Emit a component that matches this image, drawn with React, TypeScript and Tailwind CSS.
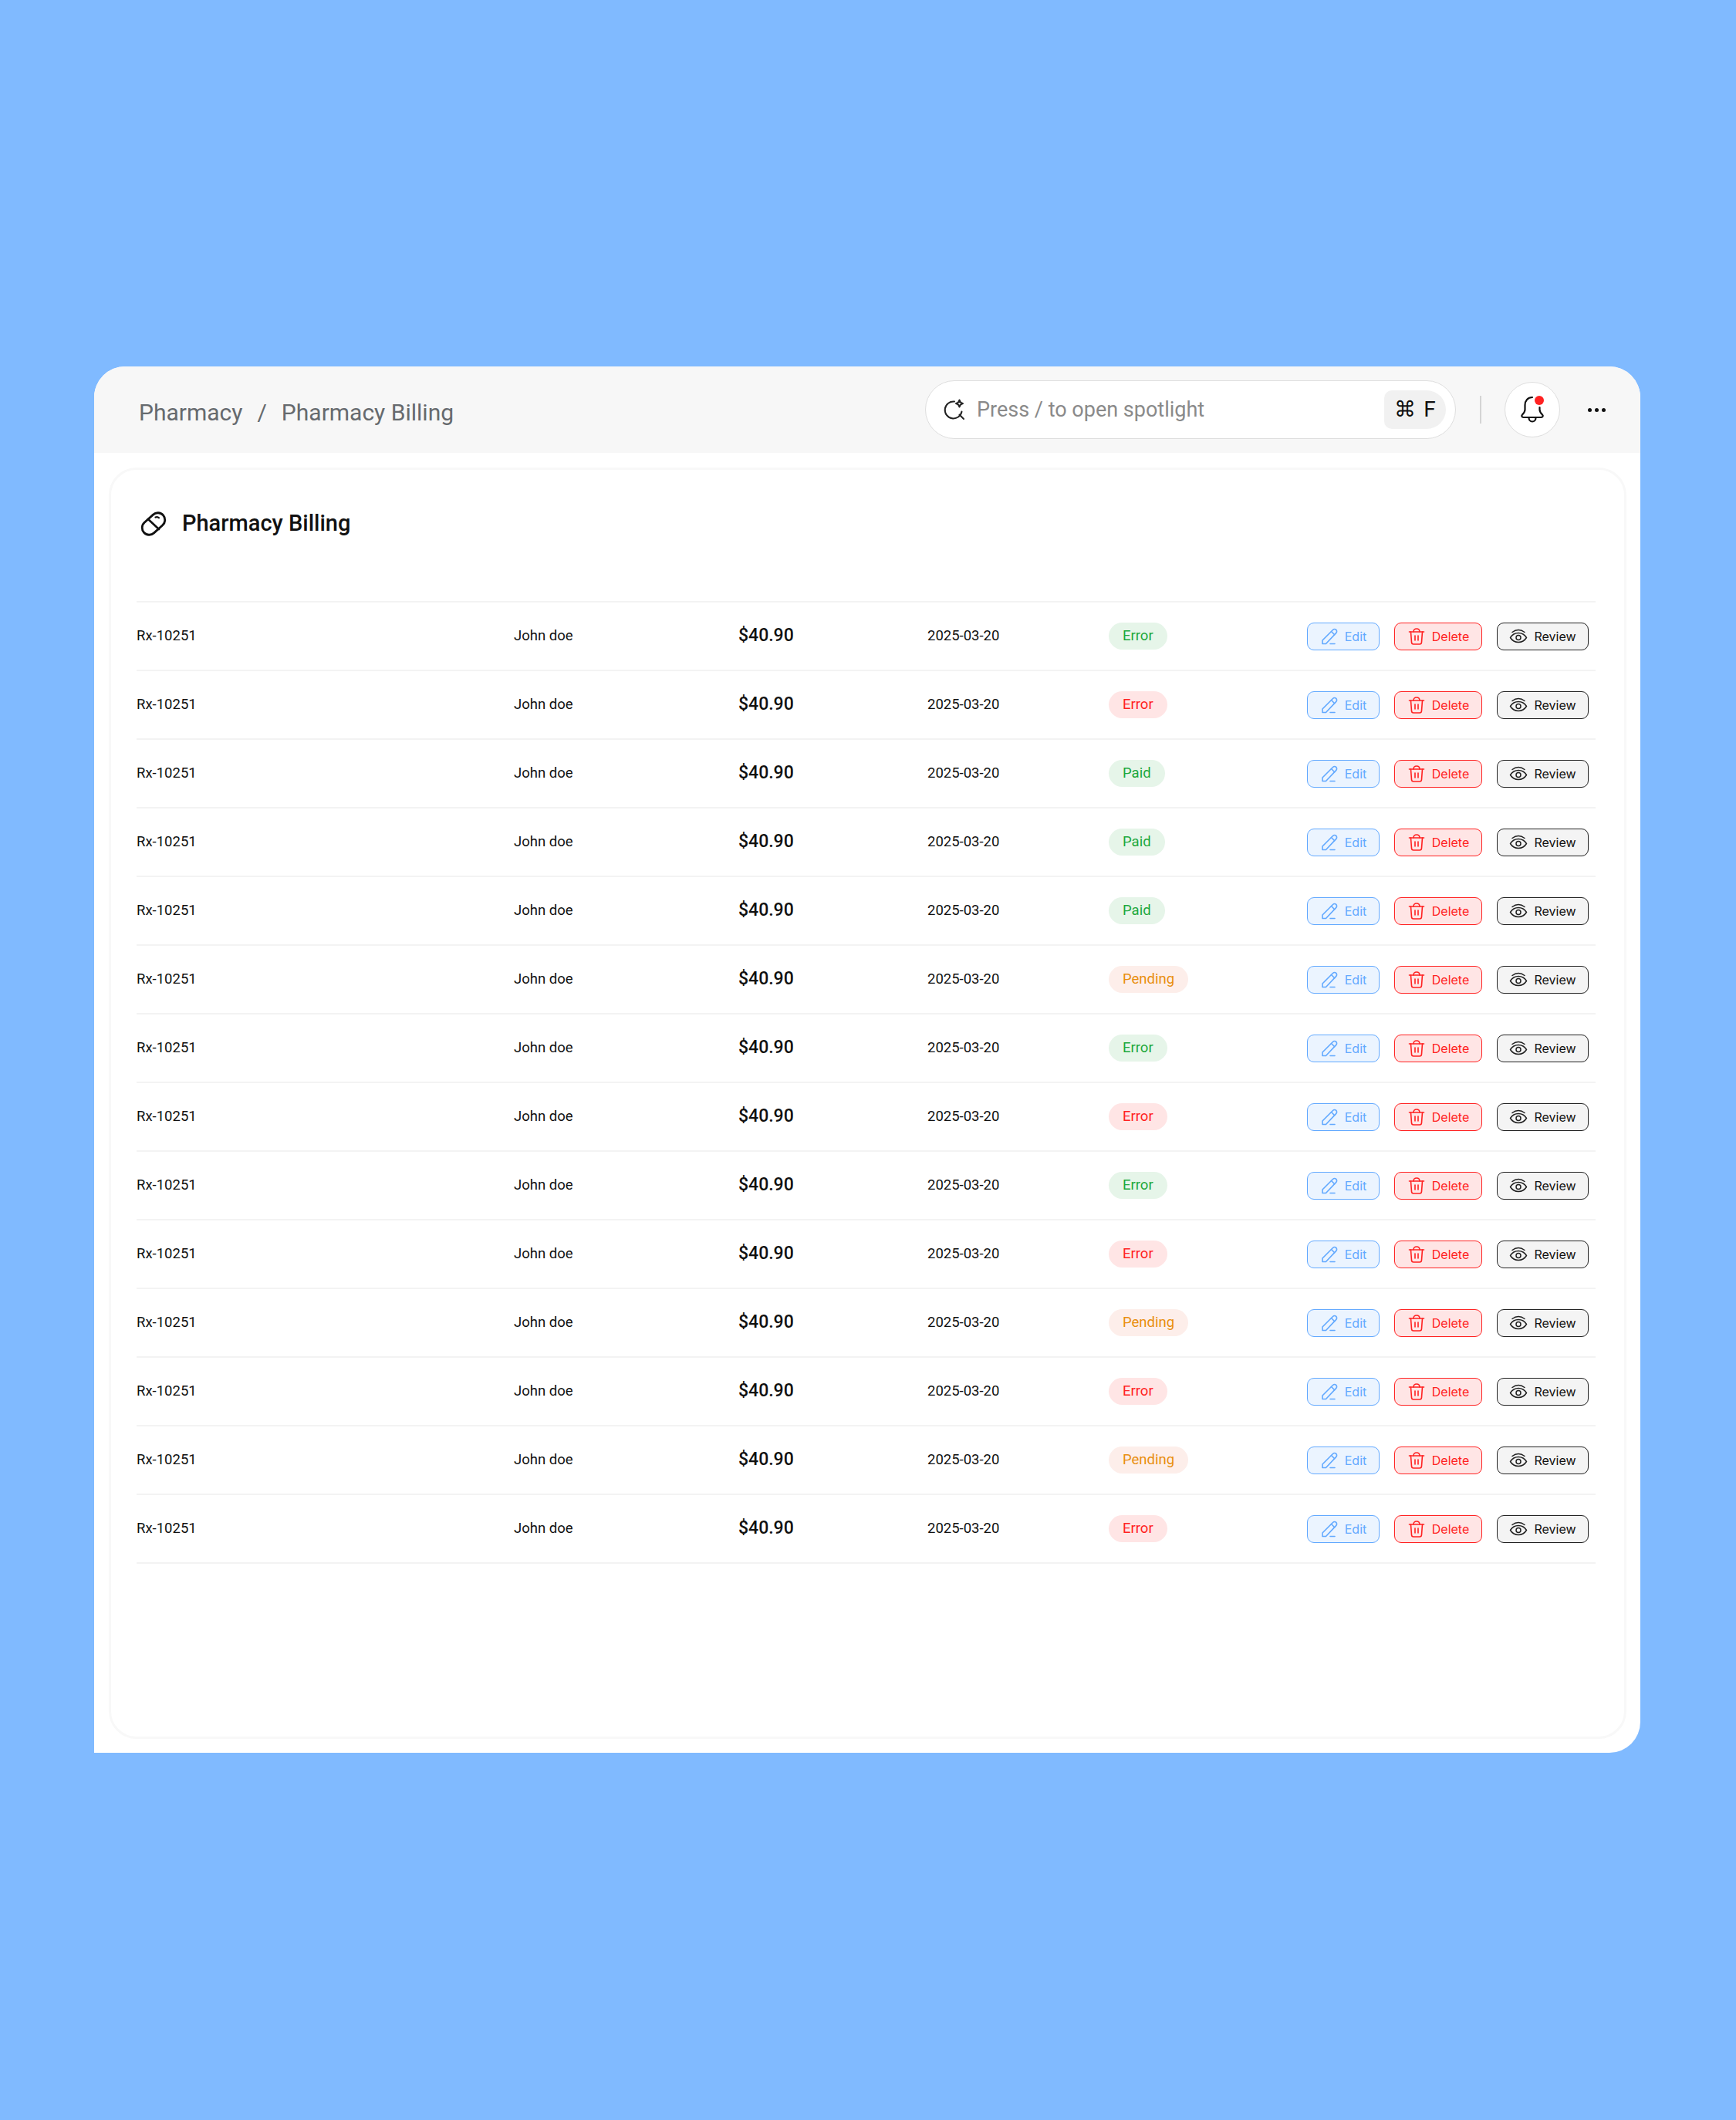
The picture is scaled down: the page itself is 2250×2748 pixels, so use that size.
const statuses = [
  { label: "Error", tone: "green" },
  { label: "Error", tone: "red" },
  { label: "Paid", tone: "green" },
  { label: "Paid", tone: "green" },
  { label: "Paid", tone: "green" },
  { label: "Pending", tone: "orange" },
  { label: "Error", tone: "green" },
  { label: "Error", tone: "red" },
  { label: "Error", tone: "green" },
  { label: "Error", tone: "red" },
  { label: "Pending", tone: "orange" },
  { label: "Error", tone: "red" },
  { label: "Pending", tone: "orange" },
  { label: "Error", tone: "red" },
];

const toneClass: Record<string, string> = {
  green: "bg-[#e6f5e9] text-[#1ea83c]",
  red: "bg-[#ffe5e5] text-[#ff2222]",
  orange: "bg-[#fdeeea] text-[#e98e0e]",
};

function PillIcon() {
  return (
    <svg width="36" height="36" viewBox="0 0 36 36" fill="none" stroke="#111" strokeWidth="2.6" strokeLinecap="round">
      <rect x="-8.5" y="-15.5" width="17" height="31" rx="8.5" transform="translate(18 18) rotate(48) scale(1.08)" />
      <path d="M11 12 L25 25" />
      <path d="M20.5 9.5c1.6-.8 3.3-.5 4.5.8" strokeWidth="2.2" />
    </svg>
  );
}

function SearchSparkIcon() {
  return (
    <svg width="30" height="30" viewBox="0 0 30 30" fill="none" stroke="#222" strokeWidth="2" strokeLinecap="round">
      <path d="M15 4.5a11 11 0 1 0 9.5 13" />
      <path d="M21.5 21.5 27 27" />
      <path d="M21.5 2.5c.6 3 1.5 3.9 4.5 4.5-3 .6-3.9 1.500-4.500 4.500-.6-3-1.500-3.900-4.500-4.500 3-.6 3.900-1.500 4.500-4.500z" strokeLinejoin="round" />
    </svg>
  );
}

function BellIcon() {
  return (
    <svg width="36" height="38" viewBox="0 0 36 38" fill="none" stroke="#111" strokeWidth="2.2" strokeLinecap="round" strokeLinejoin="round">
      <path d="M18 3c-6 0-9.500 4.500-9.500 10v6c0 3-1.500 4.500-3.500 6.500-1.500 1.500-.5 3.500 1.500 3.500h23c2 0 3-2 1.500-3.500-2-2-3.500-3.500-3.500-6.500v-3" />
      <path d="M13.500 29.500c0 3 2 5 4.500 5s4.500-2 4.500-5" />
    </svg>
  );
}

function PencilIcon() {
  return (
    <svg width="24" height="24" viewBox="0 0 24 24" fill="none" stroke="#62a9ff" strokeWidth="1.600" strokeLinecap="round" strokeLinejoin="round">
      <path d="M3 21.500v-4.500L16.500 3.500c1.300-1.300 3-1.300 4.200-.1 1.200 1.200 1.200 2.900-.1 4.200L7.500 21.500z" />
      <path d="M14.500 5.500l4.200 4.200" />
      <path d="M13 21.500h6" />
    </svg>
  );
}

function TrashIcon() {
  return (
    <svg width="24" height="24" viewBox="0 0 24 24" fill="none" stroke="#ff2222" strokeWidth="1.600" strokeLinecap="round" strokeLinejoin="round">
      <path d="M2.500 6h19" />
      <path d="M8 6c0-2.500 1.500-4 4-4s4 1.500 4 4" />
      <path d="M4.500 6l1 13.500c.1 1.500 1 2.500 2.500 2.500h8c1.500 0 2.400-1 2.500-2.500l1-13.500" />
      <path d="M10 11v6M14 11v6" />
    </svg>
  );
}

function EyeIcon() {
  return (
    <svg width="24" height="24" viewBox="0 0 24 24" fill="none" stroke="#222" strokeWidth="1.500" strokeLinecap="round" strokeLinejoin="round">
      <path d="M1.500 13.500C4 9.500 7.500 7.500 12 7.500s8 2 10.500 6c-2.500 4-6 6-10.500 6s-8-2-10.500-6z" />
      <circle cx="12" cy="13.500" r="3" />
      <path d="M4 6.500C6.500 4.500 9 3.500 12 3.500s5.500 1 8 3" />
    </svg>
  );
}

function Row({ label, tone }: { label: string; tone: string }) {
  return (
    <div className="grid h-[89px] grid-cols-[489px_291px_245px_235px_257px_1fr] items-center border-b-2 border-[#f3f3f3] text-[18.5px] text-[#111]">
      <span>Rx-10251</span>
      <span>John doe</span>
      <span className="text-[23px] font-medium">$40.90</span>
      <span>2025-03-20</span>
      <div>
        <span className={`inline-flex h-[35px] items-center rounded-full px-[18px] ${toneClass[tone]}`}>{label}</span>
      </div>
      <div className="flex items-center font-['Inter',sans-serif] text-[16px]">
        <button className="flex h-[36px] w-[94px] items-center justify-center gap-[8px] rounded-[9px] border border-[#62a9ff] bg-[#ebf4ff] text-[#62a9ff]">
          <PencilIcon />
          Edit
        </button>
        <button className="ml-[19px] flex h-[36px] w-[114px] items-center justify-center gap-[8px] rounded-[9px] border border-[#ff2222] bg-[#ffe5e5] text-[#ff2222]">
          <TrashIcon />
          Delete
        </button>
        <button className="ml-[19px] flex h-[36px] w-[119px] items-center justify-center gap-[8px] rounded-[9px] border border-[#222] bg-[#f4f4f4] text-[#111]">
          <EyeIcon />
          Review
        </button>
      </div>
    </div>
  );
}

export default function App() {
  return (
    <div className="h-[2748px] bg-[#80baff] pl-[122px] pt-[475px] font-['Roboto',sans-serif]">
      <div className="h-[1797px] w-[2004px] overflow-hidden rounded-t-[40px] rounded-br-[40px] bg-white">
        {/* Top bar */}
        <header className="flex h-[112px] items-center bg-[#f7f7f7] pl-[58px]">
          <div className="mt-[7px] flex w-[1019px] items-center text-[30px] text-[#666a6e]">
            <span>Pharmacy</span>
            <span className="mx-[19px]">/</span>
            <span>Pharmacy Billing</span>
          </div>
          <div className="flex h-[76px] w-[688px] items-center rounded-full border border-[#dedede] bg-white pl-[22px] pr-[12px]">
            <SearchSparkIcon />
            <span className="ml-[14px] flex-1 text-[27px] text-[#8a8a8a]">Press / to open spotlight</span>
            <div className="flex h-[50px] w-[80px] items-center justify-center gap-[10px] rounded-l-[10px] rounded-r-[25px] bg-[#f1f1f1] text-[28px] text-[#111]">
              <span>⌘</span>
              <span>F</span>
            </div>
          </div>
          <div className="ml-[31px] h-[36px] w-[2px] bg-[#d4d4d4]" />
          <div className="relative ml-[30px] flex h-[72px] w-[72px] items-center justify-center rounded-full border border-[#dedede] bg-white">
            <BellIcon />
            <span className="absolute left-[38px] top-[17px] h-[12px] w-[12px] rounded-full bg-[#ff2222]" />
          </div>
          <div className="ml-[36px] flex gap-[4px]">
            <span className="h-[5px] w-[5px] rounded-full bg-[#111]" />
            <span className="h-[5px] w-[5px] rounded-full bg-[#111]" />
            <span className="h-[5px] w-[5px] rounded-full bg-[#111]" />
          </div>
        </header>

        {/* Billing card */}
        <div className="ml-[19px] mt-[19px] h-[1648px] w-[1967px] rounded-[36px] border-[3px] border-[#f8f8f8] pl-[33px] pr-[37px]">
          <div className="flex h-[172px] items-start border-b-2 border-[#f3f3f3] pt-[48px]">
            <div className="ml-[4px] flex items-center">
              <PillIcon />
              <h1 className="ml-[19px] text-[29px] font-medium text-[#111]">Pharmacy Billing</h1>
            </div>
          </div>
          {statuses.map((s, i) => (
            <Row key={i} label={s.label} tone={s.tone} />
          ))}
        </div>
      </div>
    </div>
  );
}
